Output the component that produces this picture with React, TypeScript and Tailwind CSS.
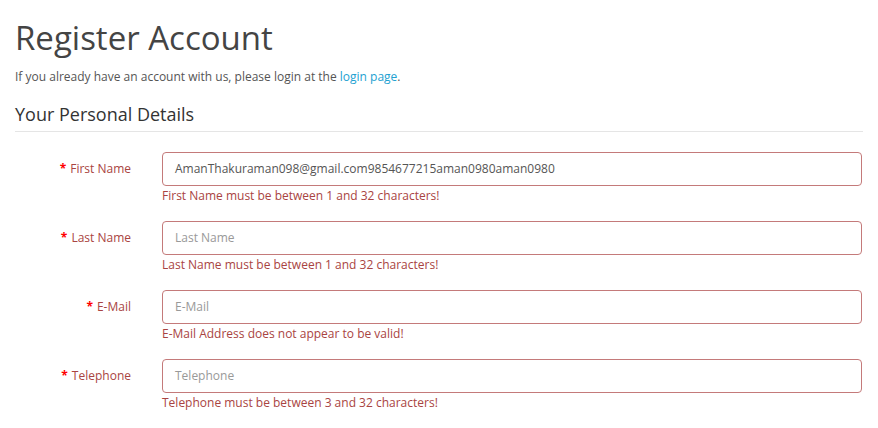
import React from "react";

const rows = [
  { label: "First Name", value: "AmanThakuraman098@gmail.com9854677215aman0980aman0980", placeholder: "First Name", error: "First Name must be between 1 and 32 characters!" },
  { label: "Last Name", value: "", placeholder: "Last Name", error: "Last Name must be between 1 and 32 characters!" },
  { label: "E-Mail", value: "", placeholder: "E-Mail", error: "E-Mail Address does not appear to be valid!" },
  { label: "Telephone", value: "", placeholder: "Telephone", error: "Telephone must be between 3 and 32 characters!" },
];

export default function App() {
  return (
    <div className="w-[878px] h-[428px] overflow-hidden bg-white px-[15px] text-[12px] text-[#666]" style={{ fontFamily: "'Open Sans', 'Noto Sans', sans-serif" }}>
      <h1 className="mt-[19px] text-[33px] leading-[38px] text-[#444] font-normal">Register Account</h1>
      <p className="mt-[11px] leading-[18px] text-[#555]">
        If you already have an account with us, please login at the{" "}
        <a className="text-[#23a1d1]">login page</a>.
      </p>
      <div className="mt-[15px] border-b border-[#e5e5e5] pb-[4px] text-[18px] leading-[26px] text-[#333]">Your Personal Details</div>
      <div className="mt-[20px] flex flex-col">
        {rows.map((r) => (
          <div key={r.label} className="flex mb-[17px]">
            <div className="w-[116px] shrink-0 h-[34px] flex items-center justify-end text-[#a94442]">
              <span className="text-[#f00] font-bold mr-[4px]">*</span>
              {r.label}
            </div>
            <div className="ml-[31px] flex-1 flex flex-col">
              <div className="h-[34px] w-[700px] rounded-[4px] border border-[#c47a7a] flex items-center px-[12px] text-[12px]">
                {r.value ? (
                  <span className="text-[#555]">{r.value}</span>
                ) : (
                  <span className="text-[#999]">{r.placeholder}</span>
                )}
              </div>
              <div className="mt-[1px] leading-[17px] text-[#a94442]">{r.error}</div>
            </div>
          </div>
        ))}
      </div>
    </div>
  );
}
